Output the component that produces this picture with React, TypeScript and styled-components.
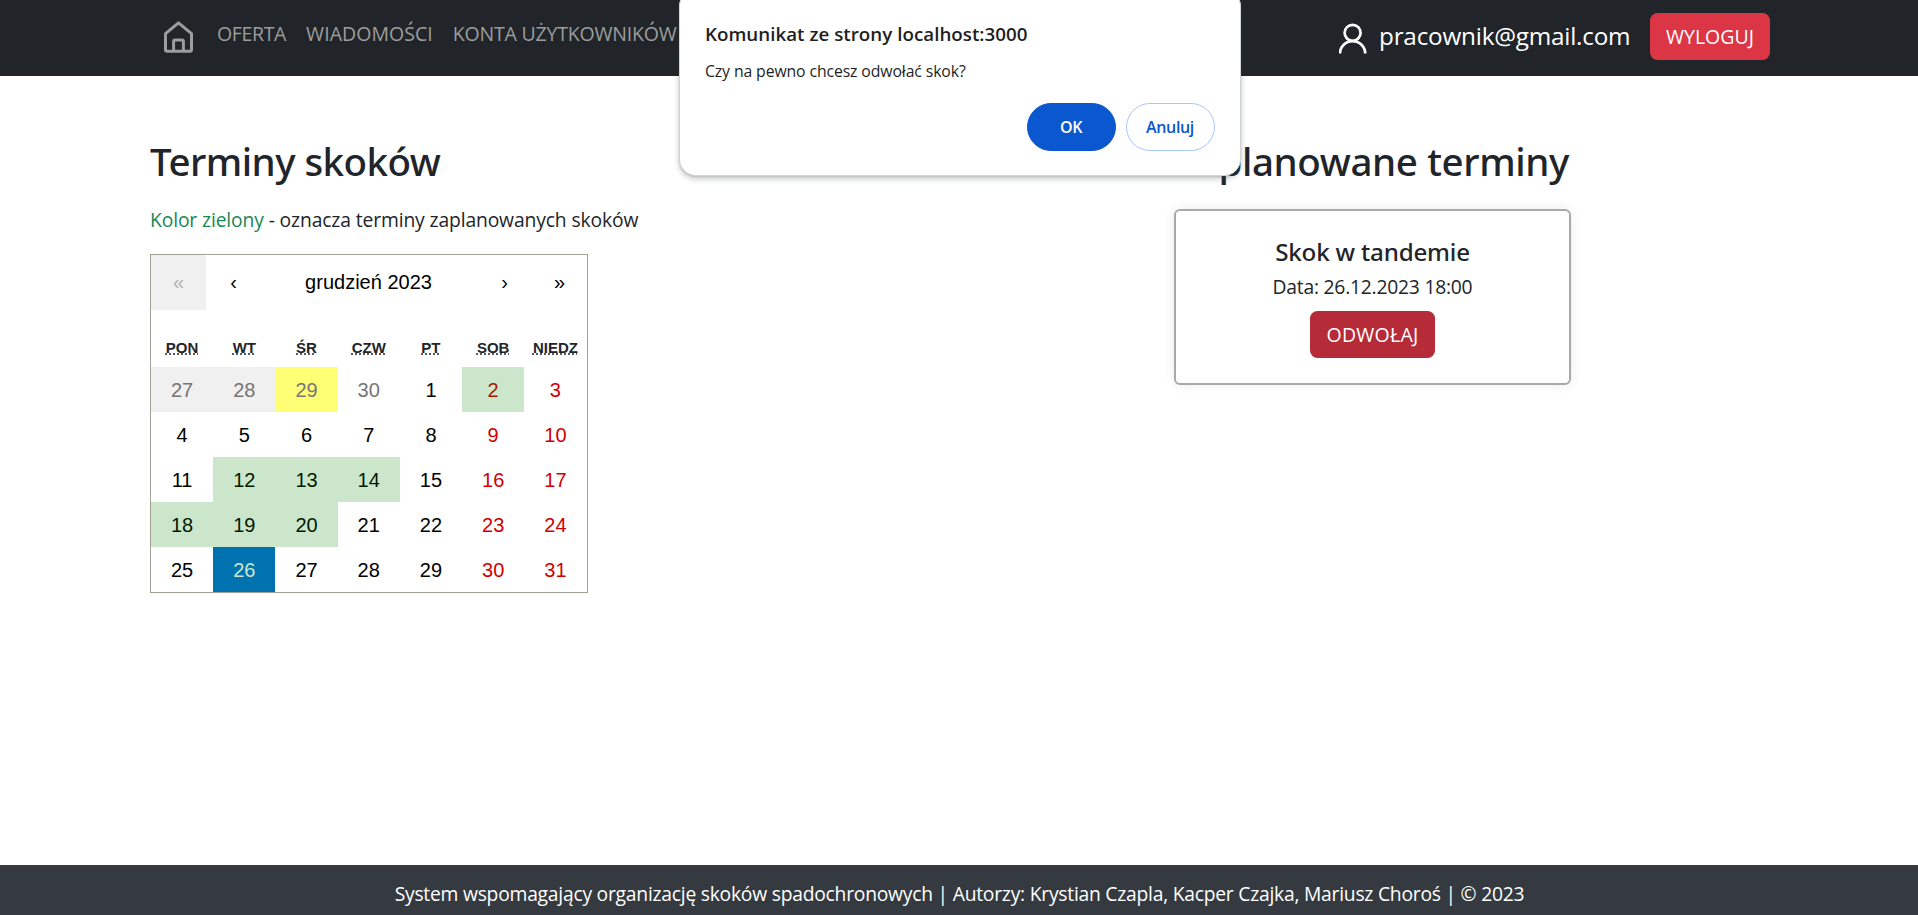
import React from "react";
import styled, { createGlobalStyle, css } from "styled-components";

const GlobalStyle = createGlobalStyle`
  *, *::before, *::after { box-sizing: border-box; }
  body {
    margin: 0;
    background: #fff;
    color: #212529;
    font-family: "Open Sans", "Noto Sans", sans-serif;
    font-size: 19.3px;
    line-height: 30px;
  }
  button { font: inherit; border: 0; margin: 0; padding: 0; cursor: pointer; }
`;

const Page = styled.div`
  position: relative;
  display: flex;
  flex-direction: column;
  height: 915px;
  overflow: hidden;
`;

const Header = styled.header`
  display: flex;
  align-items: flex-start;
  height: 76px;
  padding: 0 148px 0 163px;
  background: #212529;
`;

const HomeLink = styled.a`
  display: flex;
  margin: 20px 13px 0 0;
  color: #9b9d9e;
`;

const NavLinks = styled.nav`
  display: flex;
  padding-top: 18.5px;
`;

const NavLink = styled.a<{ $spacing: number }>`
  padding: 0 10px;
  color: #9b9d9e;
  font-size: 19.5px;
  letter-spacing: ${(p) => p.$spacing}px;
  white-space: nowrap;
`;

const Account = styled.div`
  display: flex;
  align-items: flex-start;
  margin-left: auto;
`;

const UserIcon = styled.svg`
  margin-top: 23px;
`;

const Email = styled.span`
  width: 281px;
  padding: 21px 0 0 10px;
  color: #fff;
  font-size: 24.3px;
  letter-spacing: -0.22px;
`;

const RedButton = styled.button<{ $pressed?: boolean }>`
  width: ${(p) => (p.$pressed ? 125 : 120)}px;
  height: 47px;
  padding-top: 1px;
  border-radius: 7.5px;
  background: ${(p) => (p.$pressed ? "#b52b38" : "#dc3545")};
  color: #fff;
  font-size: 19.5px;
  letter-spacing: ${(p) => (p.$pressed ? 0.25 : 0.05)}px;
`;

const LogoutSlot = styled.div`
  display: flex;
  padding-top: 13px;
`;

const Main = styled.main`
  display: flex;
  flex: 1;
  justify-content: space-between;
  padding: 61px 347px 0 150px;
`;

const Column = styled.section`
  display: flex;
  flex-direction: column;
`;

const Heading = styled.h2<{ $spacing: number; $inset?: number }>`
  margin: 0;
  padding-left: ${(p) => p.$inset ?? 0}px;
  font: 500 38.5px/48px "Noto Sans", sans-serif;
  letter-spacing: ${(p) => p.$spacing}px;
  white-space: nowrap;
`;

const Legend = styled.p`
  margin: 20px 0 19px;
  letter-spacing: -0.13px;
`;

const GreenText = styled.span`
  color: #198754;
`;

const Calendar = styled.div`
  width: 438px;
  height: 339px;
  border: 1px solid #a0a096;
  font-family: "Liberation Sans", Arial, sans-serif;
  font-size: 20px;
  line-height: 20px;
`;

const CalendarNav = styled.div`
  display: flex;
  height: 55px;
  margin-bottom: 20px;
`;

const NavArrow = styled.button`
  width: 55px;
  padding-bottom: 1px;
  background: #fff;
  color: #000;

  &:disabled {
    background: #f0f0f0;
    color: #b1b1b1;
  }
`;

const MonthLabel = styled.button`
  flex: 1;
  padding: 0 1px 2px 0;
  background: #fff;
  color: #000;
`;

const Grid = styled.div`
  display: grid;
  width: 435.5px;
  grid-template-columns: repeat(7, 1fr);
`;

const Weekday = styled.div`
  height: 37px;
  padding-top: 7px;
  font-size: 15px;
  font-weight: 700;
  line-height: 22.5px;
  text-align: center;

  abbr { text-decoration: underline dotted; }
`;

type Kind = "plain" | "weekend" | "disabled" | "outside" | "today" | "planned" | "plannedWeekend" | "active";

const tileColors: Record<Kind, [string, string]> = {
  plain: ["transparent", "#000"],
  weekend: ["transparent", "#d10000"],
  disabled: ["#f0f0f0", "#757575"],
  outside: ["transparent", "#757575"],
  today: ["#ffff76", "#757575"],
  planned: ["#cce6cc", "#001a00"],
  plannedWeekend: ["#cce6cc", "#a71a00"],
  active: ["#0072b0", "#cce6cc"],
};

const Tile = styled.button<{ $kind: Kind }>`
  height: 45px;
  ${({ $kind }) => css`
    background: ${tileColors[$kind][0]};
    color: ${tileColors[$kind][1]};
  `}
`;

const Card = styled.article`
  display: flex;
  flex-direction: column;
  align-items: center;
  width: 397px;
  height: 176px;
  margin-top: 24px;
  padding-top: 26px;
  border: 2px solid #a9a9a9;
  border-radius: 6px;
  box-shadow: 0 0 12px rgba(0, 0, 0, 0.08);
`;

const CardTitle = styled.h5`
  margin: 0 0 5px;
  font: 500 24.2px/30px "Noto Sans", sans-serif;
  letter-spacing: -0.2px;
`;

const CardDate = styled.p`
  margin: 0 0 9px;
  letter-spacing: -0.23px;
`;

const Footer = styled.footer`
  height: 50px;
  padding: 14px 0 0 1px;
  background: #343a40;
  color: #fff;
  letter-spacing: -0.24px;
  text-align: center;
  white-space: nowrap;
`;

const Dialog = styled.div`
  position: absolute;
  top: -11px;
  left: 679px;
  width: 562px;
  height: 187px;
  padding: 29px 25px 0;
  border: 1px solid #d2d5d5;
  border-radius: 17px;
  background: #fff;
  box-shadow: 0 1px 2px rgba(60, 64, 67, 0.2), 0 3px 5px 1px rgba(60, 64, 67, 0.2);
`;

const DialogTitle = styled.div`
  color: #1f1f1f;
  font-size: 18.75px;
  font-weight: 600;
  letter-spacing: 0.02px;
`;

const DialogMessage = styled.div`
  margin-top: 7px;
  color: #1f1f1f;
  font-size: 15.8px;
  letter-spacing: -0.12px;
`;

const DialogActions = styled.div`
  display: flex;
  justify-content: flex-end;
  gap: 10px;
  margin-top: 17px;
`;

const PillButton = styled.button<{ $primary?: boolean }>`
  width: 89px;
  height: 48px;
  padding-right: 1px;
  border: 1px solid ${(p) => (p.$primary ? "#0b57d0" : "#a8c7fa")};
  border-radius: 24px;
  background: ${(p) => (p.$primary ? "#0b57d0" : "#fff")};
  color: ${(p) => (p.$primary ? "#fff" : "#0b57d0")};
  font-size: 16px;
  font-weight: 600;
  letter-spacing: ${(p) => (p.$primary ? -0.3 : -0.35)}px;
`;

const weekdays: [string, string][] = [
  ["pon", "poniedziałek"], ["wt", "wtorek"], ["śr", "środa"], ["czw", "czwartek"],
  ["pt", "piątek"], ["sob", "sobota"], ["niedz", "niedziela"],
];

const planned = [2, 12, 13, 14, 18, 19, 20];

const previousMonth: { day: number; kind: Kind }[] = [
  { day: 27, kind: "disabled" },
  { day: 28, kind: "disabled" },
  { day: 29, kind: "today" },
  { day: 30, kind: "outside" },
];

const december = Array.from({ length: 31 }, (_, i): { day: number; kind: Kind } => {
  const day = i + 1;
  const weekend = (i + 4) % 7 >= 5;
  if (day === 26) return { day, kind: "active" };
  if (planned.includes(day)) return { day, kind: weekend ? "plannedWeekend" : "planned" };
  return { day, kind: weekend ? "weekend" : "plain" };
});

export default function App() {
  return (
    <>
      <GlobalStyle />
      <Page>
        <Header>
          <HomeLink>
            <svg width="31" height="34" viewBox="0 0 31 34" fill="none" stroke="currentColor" strokeWidth="3" strokeLinejoin="round">
              <path d="M2.5 13.6 15.5 2.9 28.5 13.6V29.6Q28.5 31.3 26.8 31.3H4.2Q2.5 31.3 2.5 29.6Z" />
              <path d="M10.6 31V21.4Q10.6 20 12 20H19Q20.4 20 20.4 21.4V31" />
            </svg>
          </HomeLink>
          <NavLinks>
            <NavLink $spacing={-0.35}>OFERTA</NavLink>
            <NavLink $spacing={0.05}>WIADOMOŚCI</NavLink>
            <NavLink $spacing={-0.2}>KONTA UŻYTKOWNIKÓW</NavLink>
          </NavLinks>
          <Account>
            <UserIcon width="30" height="31" viewBox="0 0 30 31" fill="none" stroke="#fff" strokeWidth="2.7">
              <circle cx="13.6" cy="9.8" r="8" />
              <path d="M1 30.4a12.6 12.3 0 0 1 25.2 0" />
            </UserIcon>
            <Email>pracownik@gmail.com</Email>
            <LogoutSlot>
              <RedButton>WYLOGUJ</RedButton>
            </LogoutSlot>
          </Account>
        </Header>

        <Main>
          <Column>
            <Heading $spacing={-0.53}>Terminy skoków</Heading>
            <Legend>
              <GreenText>Kolor zielony</GreenText> - oznacza terminy zaplanowanych skoków
            </Legend>
            <Calendar>
              <CalendarNav>
                <NavArrow disabled>«</NavArrow>
                <NavArrow>‹</NavArrow>
                <MonthLabel>grudzień 2023</MonthLabel>
                <NavArrow>›</NavArrow>
                <NavArrow>»</NavArrow>
              </CalendarNav>
              <Grid>
                {weekdays.map(([short, full]) => (
                  <Weekday key={short}>
                    <abbr title={full}>{short.toUpperCase()}</abbr>
                  </Weekday>
                ))}
                {[...previousMonth, ...december].map(({ day, kind }, i) => (
                  <Tile key={i} $kind={kind}>{day}</Tile>
                ))}
              </Grid>
            </Calendar>
          </Column>
          <Column>
            <Heading $spacing={-0.37} $inset={1}>Zaplanowane terminy</Heading>
            <Card>
              <CardTitle>Skok w tandemie</CardTitle>
              <CardDate>Data: 26.12.2023 18:00</CardDate>
              <RedButton $pressed>ODWOŁAJ</RedButton>
            </Card>
          </Column>
        </Main>

        <Footer>
          System wspomagający organizację skoków spadochronowych | Autorzy: Krystian Czapla, Kacper Czajka, Mariusz Choroś | © 2023
        </Footer>

        <Dialog role="dialog">
          <DialogTitle>Komunikat ze strony localhost:3000</DialogTitle>
          <DialogMessage>Czy na pewno chcesz odwołać skok?</DialogMessage>
          <DialogActions>
            <PillButton $primary>OK</PillButton>
            <PillButton>Anuluj</PillButton>
          </DialogActions>
        </Dialog>
      </Page>
    </>
  );
}
